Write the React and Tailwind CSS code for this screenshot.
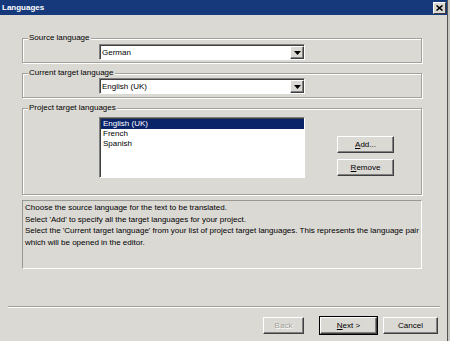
import React from "react";

const BG = "bg-[#dbd9d4]";

function Group({ label, className, children }) {
  return (
    <div
      className={`relative w-[400px] border border-[#a3a19c] shadow-[inset_1px_1px_0_#ffffff,1px_1px_0_#ffffff] ${className}`}
    >
      <span className={`absolute left-[5px] -top-[6px] px-[1px] leading-[10px] ${BG}`}>{label}</span>
      {children}
    </div>
  );
}

function Combo({ value }) {
  return (
    <div className="w-[206px] h-[16px] flex items-stretch bg-white border border-t-[#808080] border-l-[#808080] border-b-white border-r-white shadow-[inset_1px_1px_0_#404040]">
      <div className="flex-1 pl-[2px] pt-[1px] leading-[13px]">{value}</div>
      <div className="w-[14px] mt-[1px] mb-[0px] mr-[0px] bg-[#dbd9d4] border border-t-white border-l-white border-b-[#404040] border-r-[#404040] shadow-[inset_-1px_-1px_0_#808080] flex items-center justify-center">
        <svg width="7" height="4" viewBox="0 0 7 4">
          <path d="M0 0H7L3.5 4Z" fill="#000" />
        </svg>
      </div>
    </div>
  );
}

function Btn({ children, className = "", w = "w-[57px]", def = false }) {
  return (
    <div
      className={`${w} h-[17px] ${def ? "outline outline-1 outline-black" : ""} bg-[#dbd9d4] border border-t-white border-l-white border-b-[#404040] border-r-[#404040] shadow-[inset_-1px_-1px_0_#808080] flex items-center justify-center leading-[10px] ${className}`}
    >
      {children}
    </div>
  );
}

export default function App() {
  return (
    <div className={`w-[450px] h-[341px] overflow-hidden flex font-['Liberation_Sans',sans-serif] text-[8px] text-black ${BG}`}>
      <div className="w-[447px] flex flex-col">
        <div className="h-[15px] bg-[#15397b] flex items-center justify-between pl-[2px] pr-[1px]">
          <span className="text-white font-bold text-[8px] leading-[10px]">Languages</span>
          <div className="w-[13px] h-[12px] bg-[#dbd9d4] border border-t-white border-l-white border-b-[#404040] border-r-[#404040] flex items-center justify-center">
            <svg width="7" height="6" viewBox="0 0 7 6">
              <path d="M0.5 0.5L6.5 5.5M6.5 0.5L0.5 5.5" stroke="#000" strokeWidth="1.6" />
            </svg>
          </div>
        </div>

        <div className="pl-[22px] flex flex-col">
          <Group label="Source language" className="mt-[23px] h-[25px] pl-[76px] pt-[5px]">
            <Combo value="German" />
          </Group>

          <Group label="Current target language" className="mt-[10px] h-[25px] pl-[76px] pt-[4px]">
            <Combo value="English (UK)" />
          </Group>

          <Group label="Project target languages" className="mt-[10px] h-[87px] pl-[76px] pt-[8px] flex">
            <div className="w-[206px] h-[61px] bg-white border border-t-[#808080] border-l-[#808080] border-b-white border-r-white shadow-[inset_1px_1px_0_#404040] pl-[1px] pt-[1px] leading-[10px]">
              <div className="bg-[#0a246a] text-white pl-[2px] h-[10px] mr-[0px]">English (UK)</div>
              <div className="pl-[2px] h-[10px]">French</div>
              <div className="pl-[2px] h-[10px]">Spanish</div>
            </div>
            <div className="ml-[32px] pt-[19px] flex flex-col gap-[6px]">
              <Btn>
                <span><span className="underline">A</span>dd...</span>
              </Btn>
              <Btn>
                <span><span className="underline">R</span>emove</span>
              </Btn>
            </div>
          </Group>

          <div className="mt-[5px] w-[400px] h-[69px] border border-t-[#9a9893] border-l-[#9a9893] border-b-white border-r-white px-[2px] pt-[1px] leading-[11.7px]">
            Choose the source language for the text to be translated.
            <br />
            Select 'Add' to specify all the target languages for your project.
            <br />
            Select the 'Current target language' from your list of project target languages. This represents the language pair
            <br />
            which will be opened in the editor.
          </div>
        </div>

        <div className="mt-[37px] ml-[8px] w-[432px] h-[2px] border-t border-t-[#a3a19c] border-b border-b-white" />

        <div className="mt-[9px] flex pl-[263px]">
          <Btn w="w-[41px]" className="text-[#a3a19c] [text-shadow:1px_1px_0_#fff]">Back</Btn>
          <Btn w="w-[57px]" def className="ml-[16px]">
            <span><span className="underline">N</span>ext &gt;</span>
          </Btn>
          <Btn w="w-[55px]" className="ml-[6px]">Cancel</Btn>
        </div>
      </div>
      <div className="w-[1px] bg-[#555555]" />
      <div className="w-[2px] bg-[#c9c7c2]" />
    </div>
  );
}
